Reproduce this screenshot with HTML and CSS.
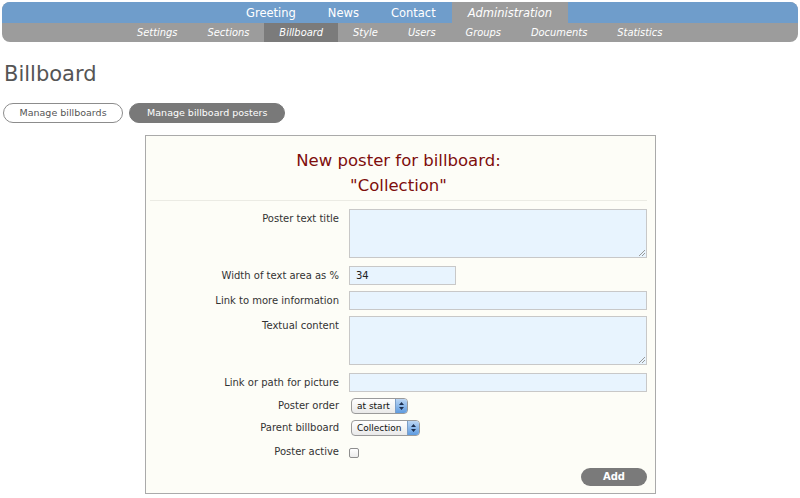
FILE: index.html
```html
<!DOCTYPE html>
<html>
<head>
<meta charset="utf-8">
<link rel="stylesheet" href="styles.css">
</head>
<body>
<nav class="nav">
  <ul class="nav-top">
    <li>Greeting</li>
    <li>News</li>
    <li>Contact</li>
    <li class="active">Administration</li>
  </ul>
  <ul class="nav-sub">
    <li>Settings</li>
    <li>Sections</li>
    <li class="active">Billboard</li>
    <li>Style</li>
    <li>Users</li>
    <li>Groups</li>
    <li>Documents</li>
    <li>Statistics</li>
  </ul>
</nav>
<h1 class="page-title">Billboard</h1>
<div class="tabs">
  <span class="pill">Manage billboards</span>
  <span class="pill filled">Manage billboard posters</span>
</div>
<div class="panel">
  <h2 class="panel-title">New poster for billboard:<br>"Collection"</h2>
  <div class="form">
    <label class="lbl">Poster text title</label>
    <div class="field"><div class="ta"><span class="grip"></span></div></div>

    <label class="lbl">Width of text area as %</label>
    <div class="field"><div class="inp short">34</div></div>

    <label class="lbl">Link to more information</label>
    <div class="field"><div class="inp"></div></div>

    <label class="lbl">Textual content</label>
    <div class="field"><div class="ta"><span class="grip"></span></div></div>

    <label class="lbl">Link or path for picture</label>
    <div class="field"><div class="inp"></div></div>

    <label class="lbl sel-lbl">Poster order</label>
    <div class="field"><span class="select">at start<span class="stepper"><svg width="7" height="10" viewBox="0 0 7 10"><path d="M3.5 1 L6 4 H1 Z M3.5 9 L6 6 H1 Z" fill="#1d2f4f"/></svg></span></span></div>

    <label class="lbl sel-lbl">Parent billboard</label>
    <div class="field"><span class="select">Collection<span class="stepper"><svg width="7" height="10" viewBox="0 0 7 10"><path d="M3.5 1 L6 4 H1 Z M3.5 9 L6 6 H1 Z" fill="#1d2f4f"/></svg></span></span></div>

    <label class="lbl">Poster active</label>
    <div class="field"><span class="check"></span></div>
  </div>
  <div class="actions"><span class="btn">Add</span></div>
</div>
</body>
</html>
```
FILE: styles.css
```css
* { box-sizing: border-box; }
body {
  margin: 0;
  font-family: "DejaVu Sans", Verdana, sans-serif;
  background: #fff;
  color: #333;
}
.nav {
  margin: 2px 2px 0;
  border-radius: 8px;
  overflow: hidden;
  background: #9c9c9c;
}
.nav ul { list-style: none; margin: 0; display: flex; }
.nav-top {
  background: #6f9dcb;
  height: 21px;
  padding: 0 0 0 228px;
  font-size: 11.5px;
}
.nav-top li {
  padding: 0 16px;
  line-height: 23px;
  color: #fff;
}
.nav-top li.active { background: #9c9c9c; font-style: italic; }
.nav-sub {
  height: 19px;
  padding: 0 0 0 120px;
  font-size: 9.9px;
}
.nav-sub li {
  padding: 0 15px;
  line-height: 19px;
  color: #fff;
  font-style: italic;
}
.nav-sub li.active { background: #7b7b7b; }

.page-title {
  margin: 18px 0 0 4px;
  font-weight: normal;
  font-size: 21px;
  line-height: 28px;
  color: #555;
}
.tabs {
  display: flex;
  gap: 6px;
  margin: 15px 0 0 3px;
}
.pill {
  display: inline-block;
  height: 20px;
  line-height: 18px;
  border: 1px solid #8c8c8c;
  border-radius: 10px;
  font-size: 9.5px;
  color: #555;
  padding: 0 15.5px;
  background: #fff;
}
.pill.filled { background: #797979; border-color: #797979; color: #fff; padding: 0 17px; }

.panel {
  width: 511px;
  margin: 12px 0 0 145px;
  border: 1px solid #aaa;
  background: #fdfdf7;
  padding: 0 8px 7px 4px;
}
.panel-title {
  margin: 12px 0 0;
  font-weight: normal;
  font-size: 16.5px;
  line-height: 25px;
  text-align: center;
  color: #7e0d0d;
  padding-bottom: 2px;
  border-bottom: 1px solid #ebebe4;
}
.form {
  display: grid;
  grid-template-columns: 189px 298px;
  column-gap: 10px;
  row-gap: 6px;
  margin-top: 8px;
  font-size: 10px;
}
.lbl { text-align: right; padding-top: 4px; color: #333; }
.ta {
  height: 49px;
  margin-bottom: 2px;
  border: 1px solid #c8c8c8;
  background: #e8f4fe;
  position: relative;
}
.grip {
  position: absolute; right: 1px; bottom: 1px;
  width: 6px; height: 6px;
  background: linear-gradient(135deg, transparent 45%, #999 45%, #999 55%, transparent 55%, transparent 70%, #999 70%, #999 80%, transparent 80%);
}
.inp {
  height: 19px;
  border: 1px solid #c8c8c8;
  background: #e8f4fe;
  padding: 0 6px;
  line-height: 17px;
  color: #222;
}
.inp.short { width: 107px; }
.sel-lbl { padding-top: 2px; }
.select {
  display: inline-flex;
  align-items: center;
  height: 16px;
  margin-left: 2px;
  border: 1px solid #9a9a9a;
  border-radius: 4px;
  background: linear-gradient(#fff, #e9e9e9);
  padding-left: 5px;
  font-size: 9px;
  color: #111;
  overflow: hidden;
}
.stepper {
  margin-left: 5px;
  width: 12px;
  height: 14px;
  display: flex; align-items: center; justify-content: center;
  background: linear-gradient(#bcd6f3, #5e9be0);
  border-left: 1px solid #7c9fc8;
}
.check {
  display: inline-block;
  margin-top: 6px;
  width: 10px; height: 10px;
  border: 1px solid #8e8e8e;
  border-radius: 2px;
  background: linear-gradient(#fff, #ececec);
}
.actions { display: flex; justify-content: flex-end; margin-top: 8px; }
.btn {
  width: 66px; height: 18px;
  border-radius: 9px;
  background: #7a7a7a;
  color: #fff;
  font-size: 10px;
  font-weight: bold;
  text-align: center;
  line-height: 18px;
}
```
